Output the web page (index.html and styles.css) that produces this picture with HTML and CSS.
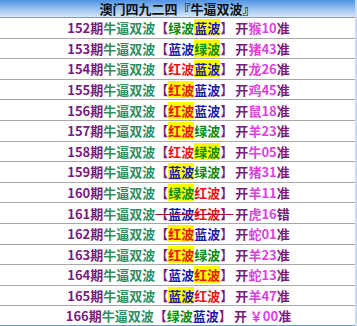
FILE: index.html
```html
<!DOCTYPE html>
<html lang="zh">
<head>
<meta charset="utf-8">
<link rel="stylesheet" href="styles.css">
</head>
<body>
<div class="board">
  <div class="head">澳门四九二四『牛逼双波』</div>
  <div class="row"><span class="p">152期</span><span class="t">牛逼双波</span><span class="p">【</span><span class="g">绿波</span><span class="b hl">蓝波</span><span class="p">】</span><span class="p k">开</span><span class="m">猴10</span><span class="p">准</span></div>
  <div class="row"><span class="p">153期</span><span class="t">牛逼双波</span><span class="p">【</span><span class="b">蓝波</span><span class="g hl">绿波</span><span class="p">】</span><span class="p k">开</span><span class="m">猪43</span><span class="p">准</span></div>
  <div class="row"><span class="p">154期</span><span class="t">牛逼双波</span><span class="p">【</span><span class="r">红波</span><span class="b hl">蓝波</span><span class="p">】</span><span class="p k">开</span><span class="m">龙26</span><span class="p">准</span></div>
  <div class="row"><span class="p">155期</span><span class="t">牛逼双波</span><span class="p">【</span><span class="r hl">红波</span><span class="b">蓝波</span><span class="p">】</span><span class="p k">开</span><span class="m">鸡45</span><span class="p">准</span></div>
  <div class="row"><span class="p">156期</span><span class="t">牛逼双波</span><span class="p">【</span><span class="r hl">红波</span><span class="b">蓝波</span><span class="p">】</span><span class="p k">开</span><span class="m">鼠18</span><span class="p">准</span></div>
  <div class="row"><span class="p">157期</span><span class="t">牛逼双波</span><span class="p">【</span><span class="r hl">红波</span><span class="g">绿波</span><span class="p">】</span><span class="p k">开</span><span class="m">羊23</span><span class="p">准</span></div>
  <div class="row"><span class="p">158期</span><span class="t">牛逼双波</span><span class="p">【</span><span class="r">红波</span><span class="g hl">绿波</span><span class="p">】</span><span class="p k">开</span><span class="m">牛05</span><span class="p">准</span></div>
  <div class="row"><span class="p">159期</span><span class="t">牛逼双波</span><span class="p">【</span><span class="b hl">蓝波</span><span class="g">绿波</span><span class="p">】</span><span class="p k">开</span><span class="m">猪31</span><span class="p">准</span></div>
  <div class="row"><span class="p">160期</span><span class="t">牛逼双波</span><span class="p">【</span><span class="g hl">绿波</span><span class="r">红波</span><span class="p">】</span><span class="p k">开</span><span class="m">羊11</span><span class="p">准</span></div>
  <div class="row"><span class="p">161期</span><span class="t">牛逼双波</span><span class="strike"><span class="p">【</span><span class="b">蓝波</span><span class="r">红波</span><span class="p">】</span></span><span class="p k">开</span><span class="m">虎16</span><span class="p">错</span></div>
  <div class="row"><span class="p">162期</span><span class="t">牛逼双波</span><span class="p">【</span><span class="r hl">红波</span><span class="b">蓝波</span><span class="p">】</span><span class="p k">开</span><span class="m">蛇01</span><span class="p">准</span></div>
  <div class="row"><span class="p">163期</span><span class="t">牛逼双波</span><span class="p">【</span><span class="r hl">红波</span><span class="g">绿波</span><span class="p">】</span><span class="p k">开</span><span class="m">羊23</span><span class="p">准</span></div>
  <div class="row"><span class="p">164期</span><span class="t">牛逼双波</span><span class="p">【</span><span class="b">蓝波</span><span class="r hl">红波</span><span class="p">】</span><span class="p k">开</span><span class="m">蛇13</span><span class="p">准</span></div>
  <div class="row"><span class="p">165期</span><span class="t">牛逼双波</span><span class="p">【</span><span class="b hl">蓝波</span><span class="r">红波</span><span class="p">】</span><span class="p k">开</span><span class="m">羊47</span><span class="p">准</span></div>
  <div class="row last"><span class="p">166期</span><span class="t">牛逼双波</span><span class="p">【</span><span class="g">绿波</span><span class="b">蓝波</span><span class="p">】</span><span class="p k">开</span><span class="m">&nbsp;￥00</span><span class="p">准</span></div>
  <div class="foot"></div>
</div>
</body>
</html>
```

FILE: styles.css
```css
html, body {
  margin: 0;
  padding: 0;
  background: #ffffff;
}
body {
  font-family: "Noto Sans CJK SC", "Noto Sans", sans-serif;
  font-weight: bold;
  font-size: 13px;
  width: 357px;
  height: 326px;
  overflow: hidden;
}
.board {
  width: 355px;
  border-right: 2px solid #c9dcef;
  display: flex;
  flex-direction: column;
}
.head {
  height: 18px;
  box-sizing: border-box;
  display: flex;
  align-items: center;
  justify-content: center;
  font-size: 13px;
  line-height: 17px;
  color: #111;
  background: linear-gradient(to bottom, #4f93e4 0%, #8dbbf0 45%, #d8e8f9 100%);
  border-bottom: 1px solid #8f9aa6;
}
.row {
  height: 19.6px;
  border-bottom: 1px solid #a8a8a8;
  display: flex;
  align-items: center;
  justify-content: center;
  white-space: nowrap;
  line-height: 17px;
  padding-left: 2px;
}
.row.last {
  border-bottom: none;
  height: 19px;
}
.foot {
  height: 3px;
  background: #5d9be3;
}
.p { color: #7b1c7b; }
.t { color: #2f8f63; }
.g { color: #0a8a12; }
.b { color: #1b1ba8; }
.r { color: #ee1111; }
.m { color: #e03fe0; }
.k { margin-left: 2px; }
.hl { background: #ffff00; }
.strike {
  text-decoration: line-through;
  text-decoration-color: #a0102a;
  text-decoration-thickness: 1px;
}
```
